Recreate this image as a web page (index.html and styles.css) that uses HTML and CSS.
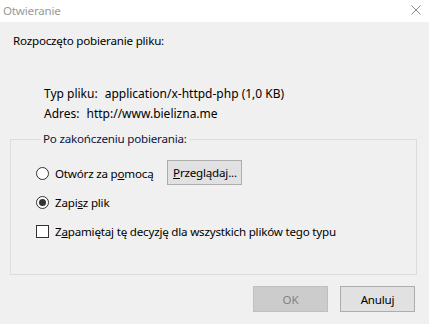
FILE: index.html
```html
<!DOCTYPE html>
<html lang="pl">
<head>
    <meta charset="UTF-8">
    <meta name="viewport" content="width=device-width, initial-scale=1.0">
    <title>Otwieranie</title>
    <link rel="stylesheet" href="styles.css">
</head>
<body>
    <div class="window">
        <div class="titlebar">
            <span class="title">Otwieranie</span>
            <svg class="close" width="10" height="10" viewBox="0 0 10 10">
                <path d="M0.5 0.5 L9.5 9.5 M9.5 0.5 L0.5 9.5" stroke="#888" stroke-width="1" fill="none"/>
            </svg>
        </div>

        <div class="content">
            <p class="intro">Rozpoczęto pobieranie pliku:</p>

            <div class="info">
                <div class="info-row">
                    <span>Typ pliku:</span>
                    <span>application/x-httpd-php (1,0 KB)</span>
                </div>
                <div class="info-row">
                    <span>Adres:</span>
                    <span>http://www.bielizna.me</span>
                </div>
            </div>

            <fieldset class="group">
                <legend>Po zakończeniu pobierania:</legend>

                <div class="option">
                    <span class="radio"></span>
                    <span class="label">Otwórz za p<u>o</u>mocą</span>
                    <button class="btn browse"><u>P</u>rzeglądaj...</button>
                </div>
                <div class="option">
                    <span class="radio checked"></span>
                    <span class="label">Zapi<u>s</u>z plik</span>
                </div>
                <div class="option remember">
                    <span class="checkbox"></span>
                    <span class="label">Z<u>a</u>pamiętaj tę decyzję dla wszystkich plików tego typu</span>
                </div>
            </fieldset>

            <div class="actions">
                <button class="btn disabled">OK</button>
                <button class="btn">Anuluj</button>
            </div>
        </div>
    </div>
</body>
</html>
```

FILE: styles.css
```css
* {
    margin: 0;
    padding: 0;
    box-sizing: border-box;
}

body {
    font-family: "Noto Sans", "Open Sans", sans-serif;
    font-size: 11.6px;
    letter-spacing: -0.2px;
    color: #000;
    background: #f0f0f0;
    width: 429px;
    height: 324px;
    overflow: hidden;
}

.titlebar {
    height: 22px;
    background: #fff;
    display: flex;
    align-items: center;
    justify-content: space-between;
    padding: 0 8px 1px 3px;
}

.title {
    color: #999;
    line-height: 16px;
}

.close {
    display: block;
    margin-top: -1px;
}

.content {
    padding: 0 12px 0 10px;
}

.intro {
    line-height: 16px;
    margin: 11px 0 0 3px;
}

.info {
    margin: 35px 0 0 34px;
    font-size: 12px;
    letter-spacing: 0;
}

.info-row {
    display: flex;
    gap: 7px;
    line-height: 20px;
}

.group {
    border: 1px solid #dcdcdc;
    height: 144px;
    margin-top: 7px;
    padding: 0 0 0 25px;
}

.group legend {
    margin-left: 5px;
    padding: 0 2px;
    line-height: 16px;
    color: #0c1640;
}

.option {
    display: flex;
    align-items: center;
    gap: 6px;
    height: 25px;
    line-height: 16px;
}

.option:first-of-type {
    margin-top: 14px;
}

.option + .option {
    margin-top: 4px;
}

.option.remember {
    margin-top: 4px;
}

.radio {
    width: 13px;
    height: 13px;
    border: 1px solid #333;
    border-radius: 50%;
    background: #fff;
    display: flex;
    align-items: center;
    justify-content: center;
}

.radio.checked::after {
    content: "";
    width: 7px;
    height: 7px;
    border-radius: 50%;
    background: #333;
}

.checkbox {
    width: 13px;
    height: 13px;
    border: 1px solid #333;
    background: #fff;
}

.btn {
    font-family: inherit;
    font-size: inherit;
    letter-spacing: inherit;
    color: #000;
    background: #e1e1e1;
    border: 1px solid #adadad;
    width: 75px;
    height: 26px;
}

.browse {
    height: 25px;
    margin: -3px 0 0 8px;
}

.btn.disabled {
    background: #cccccc;
    border-color: #bfbfbf;
    color: #838383;
}

.actions {
    display: flex;
    justify-content: flex-end;
    gap: 12px;
    margin-top: 11px;
    padding-right: 2px;
}
```
